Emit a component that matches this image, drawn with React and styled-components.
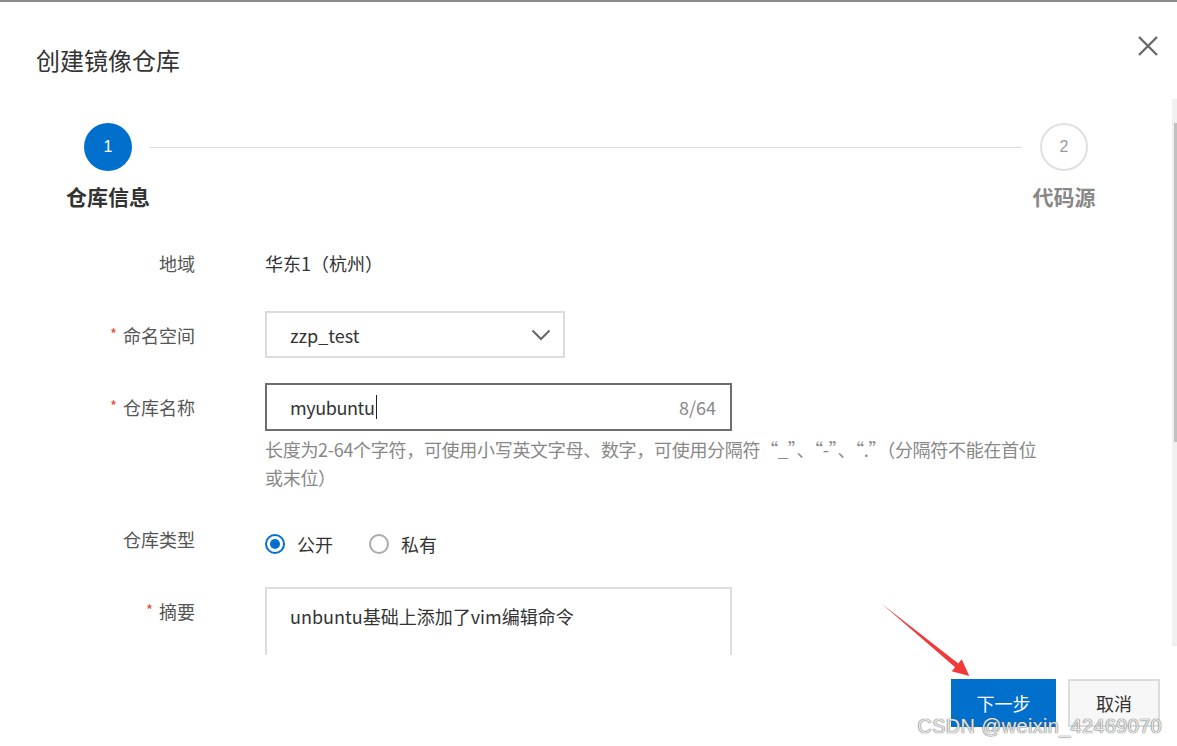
import React from "react";
import styled, { createGlobalStyle } from "styled-components";

const GlobalStyle = createGlobalStyle`
  html, body {
    margin: 0;
    padding: 0;
    background: #fff;
    overflow: hidden;
  }
  body {
    font-family: "Noto Sans CJK SC", "Noto Sans", sans-serif;
  }
`;

const Page = styled.div`
  position: relative;
  width: 1177px;
  height: 746px;
  display: flex;
  flex-direction: column;
  border-top: 2px solid #8a8a8a;
  box-sizing: border-box;
  background: #fff;
  overflow: hidden;
`;

const Header = styled.div`
  display: flex;
  justify-content: space-between;
  align-items: flex-start;
  height: 97px;
  flex-shrink: 0;
  padding: 0 17px 0 36px;
  box-sizing: border-box;
`;

const Title = styled.h3`
  margin: 42px 0 0;
  font-size: 24px;
  line-height: 32px;
  font-weight: 400;
  color: #333;
`;

const CloseButton = styled.button`
  margin-top: 32px;
  width: 24px;
  height: 24px;
  padding: 0;
  border: none;
  background: none;
  cursor: pointer;
  display: flex;
`;

const Body = styled.div`
  flex: 1;
  min-height: 0;
  display: flex;
`;

const Content = styled.div`
  flex: 1;
  overflow: hidden;
`;

const ScrollTrack = styled.div`
  width: 5px;
  flex-shrink: 0;
  margin-bottom: 9px;
  padding-top: 24px;
  box-sizing: border-box;
  background: #f0f0f0;
`;

const ScrollThumb = styled.div`
  height: 319px;
  margin-left: 2px;
  background: #c1c1c1;
`;

const StepsRow = styled.div`
  display: flex;
  align-items: flex-start;
  padding: 24px 66px 0 66px;
`;

const StepItem = styled.div`
  width: 84px;
  display: flex;
  flex-direction: column;
  align-items: center;
`;

const StepCircle = styled.div`
  width: 48px;
  height: 48px;
  border-radius: 50%;
  box-sizing: border-box;
  display: flex;
  align-items: center;
  justify-content: center;
  font-size: 16px;
  font-family: "Liberation Sans", Arial, sans-serif;
  background: ${(p) => (p.$active ? "#0070cc" : "#fff")};
  color: ${(p) => (p.$active ? "#fff" : "#999")};
  border: ${(p) => (p.$active ? "none" : "2px solid #e0e0e0")};
`;

const StepLabel = styled.div`
  margin-top: 11px;
  font-size: 21px;
  line-height: 28px;
  font-weight: 700;
  white-space: nowrap;
  color: ${(p) => (p.$active ? "#333" : "#888")};
`;

const Connector = styled.div`
  flex: 1;
  height: 1px;
  margin-top: 24px;
  background: #dcdcdc;
`;

const Form = styled.div`
  margin-top: 29px;
  display: grid;
  grid-template-columns: 195px 1fr;
  column-gap: 70px;
  row-gap: 24px;
`;

const Label = styled.div`
  display: flex;
  justify-content: flex-end;
  align-items: center;
  height: 48px;
  font-size: 18px;
  color: #555;
  white-space: nowrap;
`;

const Star = styled.span`
  color: #e8453c;
  font-size: 15px;
  line-height: 1;
  margin-right: 6px;
  margin-top: -4px;
`;

const Value = styled.div`
  font-size: 18px;
  line-height: 48px;
  color: #333;
`;

const Select = styled.div`
  width: 300px;
  height: 47px;
  box-sizing: border-box;
  border: 2px solid #dcdcdc;
  display: flex;
  align-items: center;
  justify-content: space-between;
  padding: 0 12px 0 23px;
  font-size: 18px;
  color: #333;
`;

const Field = styled.div`
  display: flex;
  flex-direction: column;
`;

const InputBox = styled.div`
  width: 467px;
  height: 48px;
  box-sizing: border-box;
  border: 2px solid #6e6e6e;
  display: flex;
  align-items: center;
  justify-content: space-between;
  padding: 0 14px 0 23px;
  font-size: 18px;
  color: #333;
`;

const InputText = styled.span`
  display: flex;
  align-items: center;
  letter-spacing: -0.4px;
`;

const Caret = styled.span`
  display: inline-block;
  width: 1px;
  height: 24px;
  background: #222;
  margin-left: 1px;
`;

const Counter = styled.span`
  color: #888;
`;

const Help = styled.div`
  margin-top: 4px;
  width: 800px;
  font-size: 18px;
  line-height: 28px;
  color: #888;
  letter-spacing: -0.3px;
`;

const RadioGroup = styled.div`
  display: flex;
  align-items: center;
  gap: 36px;
  height: 48px;
  padding-top: 10px;
  box-sizing: border-box;
`;

const RadioItem = styled.label`
  display: flex;
  align-items: center;
  gap: 12px;
  font-size: 18px;
  color: #333;
`;

const RadioDot = styled.span`
  width: 20px;
  height: 20px;
  border-radius: 50%;
  box-sizing: border-box;
  border: 2px solid ${(p) => (p.$checked ? "#0070cc" : "#aaa")};
  display: flex;
  align-items: center;
  justify-content: center;

  &::after {
    content: "";
    width: 10px;
    height: 10px;
    border-radius: 50%;
    background: ${(p) => (p.$checked ? "#0070cc" : "transparent")};
  }
`;

const TextArea = styled.div`
  width: 467px;
  height: 130px;
  box-sizing: border-box;
  border: 2px solid #dcdcdc;
  padding: 14px 23px;
  font-size: 18px;
  line-height: 26px;
  color: #333;
`;

const Footer = styled.div`
  height: 91px;
  flex-shrink: 0;
  display: flex;
  justify-content: flex-end;
  align-items: flex-start;
  gap: 12px;
  padding: 24px 17px 0 0;
  box-sizing: border-box;
`;

const Button = styled.button`
  height: 48px;
  width: ${(p) => (p.$primary ? "105px" : "92px")};
  box-sizing: border-box;
  padding: 0;
  font-family: inherit;
  font-size: 18px;
  cursor: pointer;
  background: ${(p) => (p.$primary ? "#0070cc" : "#f7f7f7")};
  color: ${(p) => (p.$primary ? "#fff" : "#333")};
  border: ${(p) => (p.$primary ? "none" : "2px solid #dcdcdc")};
`;

const Arrow = styled.svg`
  position: absolute;
  left: 870px;
  top: 590px;
  width: 110px;
  height: 95px;
  pointer-events: none;
`;

const Watermark = styled.div`
  position: absolute;
  right: 15px;
  bottom: 8px;
  font-family: "Liberation Sans", Arial, sans-serif;
  font-size: 20px;
  line-height: 24px;
  letter-spacing: 0.3px;
  color: rgba(255, 255, 255, 0.85);
  text-shadow: 0 0 1px #555, 0 0 1px #777;
  pointer-events: none;
`;

function App() {
  return (
    <>
      <GlobalStyle />
      <Page>
        <Header>
          <Title>创建镜像仓库</Title>
          <CloseButton aria-label="close">
            <svg width="24" height="24" viewBox="0 0 24 24">
              <path
                d="M3 3 L21 21 M21 3 L3 21"
                stroke="#6a6a6a"
                strokeWidth="2.4"
                fill="none"
              />
            </svg>
          </CloseButton>
        </Header>

        <Body>
          <Content>
            <StepsRow>
              <StepItem>
                <StepCircle $active>1</StepCircle>
                <StepLabel $active>仓库信息</StepLabel>
              </StepItem>
              <Connector />
              <StepItem>
                <StepCircle>2</StepCircle>
                <StepLabel>代码源</StepLabel>
              </StepItem>
            </StepsRow>

            <Form>
              <Label>地域</Label>
              <Value>华东1（杭州）</Value>

              <Label>
                <Star>*</Star>命名空间
              </Label>
              <div>
                <Select>
                  <span>zzp_test</span>
                  <svg width="20" height="12" viewBox="0 0 20 12">
                    <path
                      d="M1.5 1.5 L10 10 L18.5 1.5"
                      stroke="#666"
                      strokeWidth="2"
                      fill="none"
                    />
                  </svg>
                </Select>
              </div>

              <Label>
                <Star>*</Star>仓库名称
              </Label>
              <Field>
                <InputBox>
                  <InputText>
                    myubuntu
                    <Caret />
                  </InputText>
                  <Counter>8/64</Counter>
                </InputBox>
                <Help>
                  长度为2-64个字符，可使用小写英文字母、数字，可使用分隔符“_”、“-”、“.”（分隔符不能在首位
                  <br />
                  或末位）
                </Help>
              </Field>

              <Label>仓库类型</Label>
              <RadioGroup>
                <RadioItem>
                  <RadioDot $checked />
                  公开
                </RadioItem>
                <RadioItem>
                  <RadioDot />
                  私有
                </RadioItem>
              </RadioGroup>

              <Label>
                <Star>*</Star>摘要
              </Label>
              <div>
                <TextArea>unbuntu基础上添加了vim编辑命令</TextArea>
              </div>
            </Form>
          </Content>
          <ScrollTrack>
            <ScrollThumb />
          </ScrollTrack>
        </Body>

        <Footer>
          <Button $primary>下一步</Button>
          <Button>取消</Button>
        </Footer>

        <Arrow viewBox="870 590 110 95">
          <polygon
            points="882,602 955.1,665.2 951.7,669.3 969.3,674 961.7,657.3 958.3,661.4"
            fill="#f03a3a"
          />
        </Arrow>
        <Watermark>CSDN @weixin_42469070</Watermark>
      </Page>
    </>
  );
}

export default App;
